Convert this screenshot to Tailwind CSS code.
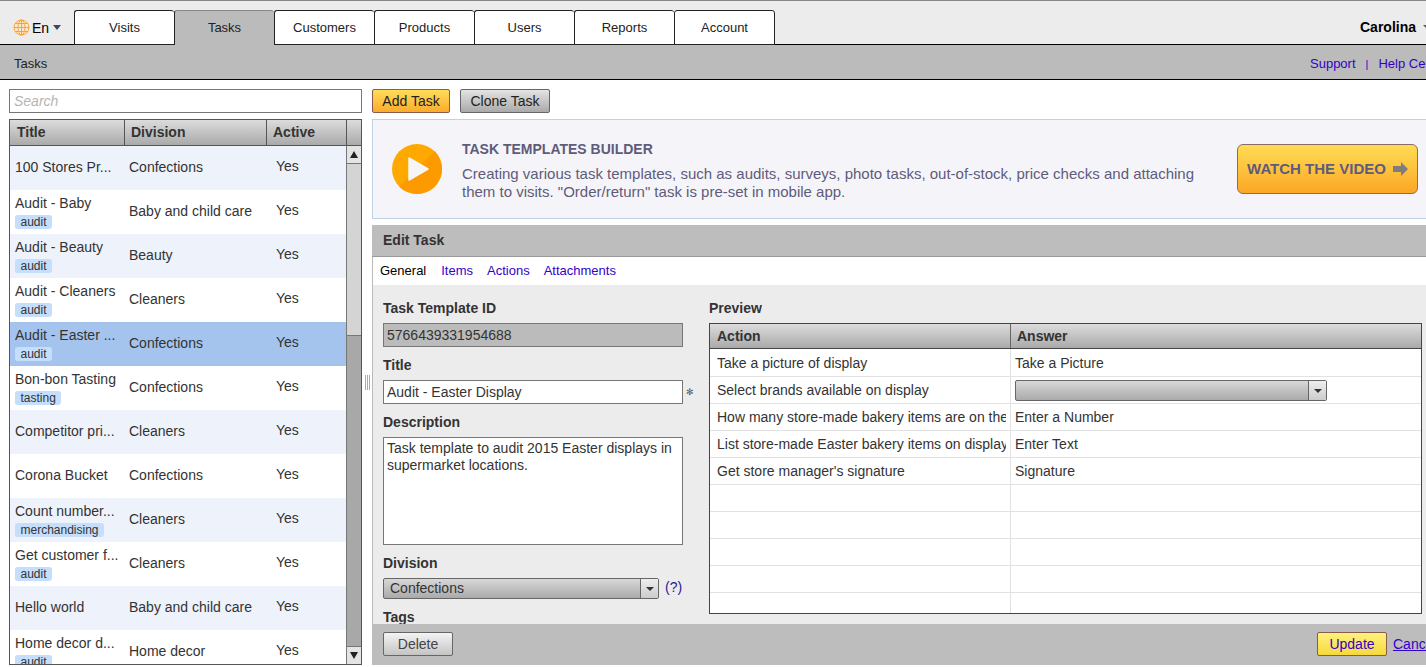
<!DOCTYPE html>
<html lang="en">

<head>
    <meta charset="UTF-8">
    <meta name="viewport" content="width=device-width, initial-scale=1.0">
    <script src="https://cdn.jsdelivr.net/npm/@tailwindcss/browser@4"></script>
    <title>Tasks</title>
</head>

<body class="h-[667px] w-[1426px] overflow-hidden bg-white text-[14px] leading-[18px] text-[#333] font-['Liberation_Sans',sans-serif]">
    <!-- top nav -->
    <header class="flex h-[45px] border-t border-t-[#888] border-b border-b-black bg-[#ececec]">
        <div class="flex w-[74px] shrink-0 items-center pt-[10px] pl-[13px] text-black">
            <svg class="h-[17px] w-[17px]" viewBox="0 0 17 17" fill="none" stroke="#f7a23c" stroke-width="1">
                <circle cx="8.5" cy="8.5" r="7.5" fill="#fde9cf" />
                <ellipse cx="8.5" cy="8.5" rx="3.5" ry="7.5" />
                <path d="M8.5 1v15M1 8.5h15M2 4.5h13M2 12.5h13" />
            </svg>
            <span class="ml-[2px]">En</span>
            <span class="ml-[4px] h-0 w-0 border-x-[4.5px] border-t-[5px] border-x-transparent border-t-[#3a4a63]"></span>
        </div>
        <nav class="mt-[9px] flex h-[35px] text-[13px]">
            <a class="flex w-[100px] items-center justify-center rounded-t-[3px] border-l border-y border-l-[#222] border-y-[#222] bg-white text-[#222]">Visits</a>
            <a class="flex w-[100px] items-center justify-center rounded-t-[3px] border-l border-t border-l-[#222] border-t-[#888] bg-[#bbb] text-[#222]">Tasks</a>
            <a class="flex w-[100px] items-center justify-center rounded-t-[3px] border-l border-y border-l-[#222] border-y-[#222] bg-white text-[#222]">Customers</a>
            <a class="flex w-[100px] items-center justify-center rounded-t-[3px] border-l border-y border-l-[#222] border-y-[#222] bg-white text-[#222]">Products</a>
            <a class="flex w-[100px] items-center justify-center rounded-t-[3px] border-l border-y border-l-[#222] border-y-[#222] bg-white text-[#222]">Users</a>
            <a class="flex w-[100px] items-center justify-center rounded-t-[3px] border-l border-y border-l-[#222] border-y-[#222] bg-white text-[#222]">Reports</a>
            <a class="flex w-[101px] items-center justify-center rounded-t-[3px] border border-[#222] bg-white text-[#222]">Account</a>
        </nav>
        <div class="ml-auto flex items-center pt-[8px] font-bold text-black">
            <span>Carolina</span>
            <span class="ml-[7px] mr-[-3px] h-0 w-0 border-x-[3px] border-t-[3px] border-x-transparent border-t-[#555]"></span>
        </div>
    </header>

    <!-- sub nav -->
    <div class="flex h-[35px] items-center justify-between border-b border-b-black bg-[#bbb] pt-[4px] pl-[14px] text-[13px]">
        <span class="text-[#222]">Tasks</span>
        <div class="flex w-[116px] shrink-0 items-center whitespace-nowrap text-[#3300cc]">
            <a>Support</a>
            <span class="ml-[10px] text-[11px]">|</span>
            <a class="ml-[10px]">Help Center</a>
        </div>
    </div>

    <main class="flex pt-[9px] pl-[9px]">
        <!-- task list -->
        <section class="w-[353px] shrink-0">
            <input type="text" placeholder="Search" class="block h-[24px] w-full border border-[#777] px-[4px] text-[14px] italic placeholder:text-[#b5b5b5] outline-none">
            <div class="mt-[6px] h-[546px] overflow-hidden border border-[#555]">
                <div class="flex h-[26px] border-b border-b-[#555] bg-gradient-to-b from-[#dcdcdc] to-[#aaa] font-bold text-[#333]">
                    <div class="flex w-[115px] items-center border-r border-r-[#555] pb-[2px] pl-[7px]">Title</div>
                    <div class="flex w-[142px] items-center border-r border-r-[#555] pb-[2px] pl-[6px]">Division</div>
                    <div class="flex w-[80px] items-center border-r border-r-[#555] pb-[2px] pl-[6px]">Active</div>
                    <div class="flex-1"></div>
                </div>
                <div class="flex h-[518px]">
                    <div class="w-[337px] overflow-hidden">
                        <div class="grid h-[44px] grid-cols-[119px_147px_1fr] bg-[#eef2fb]">
                            <div class="flex flex-col justify-center pb-[2px] pl-[5px]">100 Stores Pr...</div>
                            <div class="flex items-center pb-[2px]">Confections</div>
                            <div class="flex items-center pb-[5px]">Yes</div>
                        </div>
                        <div class="grid h-[44px] grid-cols-[119px_147px_1fr] bg-white">
                            <div class="pl-[5px] pt-[4px]">Audit - Baby<span class="mt-[3px] block h-[14px] w-fit rounded-[3px] bg-[#c5defc] px-[5.5px] text-[12px] leading-[14px]">audit</span></div>
                            <div class="flex items-center pb-[2px]">Baby and child care</div>
                            <div class="flex items-center pb-[5px]">Yes</div>
                        </div>
                        <div class="grid h-[44px] grid-cols-[119px_147px_1fr] bg-[#eef2fb]">
                            <div class="pl-[5px] pt-[4px]">Audit - Beauty<span class="mt-[3px] block h-[14px] w-fit rounded-[3px] bg-[#c5defc] px-[5.5px] text-[12px] leading-[14px]">audit</span></div>
                            <div class="flex items-center pb-[2px]">Beauty</div>
                            <div class="flex items-center pb-[5px]">Yes</div>
                        </div>
                        <div class="grid h-[44px] grid-cols-[119px_147px_1fr] bg-white">
                            <div class="pl-[5px] pt-[4px]">Audit - Cleaners<span class="mt-[3px] block h-[14px] w-fit rounded-[3px] bg-[#c5defc] px-[5.5px] text-[12px] leading-[14px]">audit</span></div>
                            <div class="flex items-center pb-[2px]">Cleaners</div>
                            <div class="flex items-center pb-[5px]">Yes</div>
                        </div>
                        <div class="grid h-[44px] grid-cols-[119px_147px_1fr] bg-[#a4c3ed]">
                            <div class="pl-[5px] pt-[4px]">Audit - Easter ...<span class="mt-[3px] block h-[14px] w-fit rounded-[3px] bg-[#c5defc] px-[5.5px] text-[12px] leading-[14px]">audit</span></div>
                            <div class="flex items-center pb-[2px]">Confections</div>
                            <div class="flex items-center pb-[5px]">Yes</div>
                        </div>
                        <div class="grid h-[44px] grid-cols-[119px_147px_1fr] bg-white">
                            <div class="pl-[5px] pt-[4px]">Bon-bon Tasting<span class="mt-[3px] block h-[14px] w-fit rounded-[3px] bg-[#c5defc] px-[5.5px] text-[12px] leading-[14px]">tasting</span></div>
                            <div class="flex items-center pb-[2px]">Confections</div>
                            <div class="flex items-center pb-[5px]">Yes</div>
                        </div>
                        <div class="grid h-[44px] grid-cols-[119px_147px_1fr] bg-[#eef2fb]">
                            <div class="flex flex-col justify-center pb-[2px] pl-[5px]">Competitor pri...</div>
                            <div class="flex items-center pb-[2px]">Cleaners</div>
                            <div class="flex items-center pb-[5px]">Yes</div>
                        </div>
                        <div class="grid h-[44px] grid-cols-[119px_147px_1fr] bg-white">
                            <div class="flex flex-col justify-center pb-[2px] pl-[5px]">Corona Bucket</div>
                            <div class="flex items-center pb-[2px]">Confections</div>
                            <div class="flex items-center pb-[5px]">Yes</div>
                        </div>
                        <div class="grid h-[44px] grid-cols-[119px_147px_1fr] bg-[#eef2fb]">
                            <div class="pl-[5px] pt-[4px]">Count number...<span class="mt-[3px] block h-[14px] w-fit rounded-[3px] bg-[#c5defc] px-[5.5px] text-[12px] leading-[14px]">merchandising</span></div>
                            <div class="flex items-center pb-[2px]">Cleaners</div>
                            <div class="flex items-center pb-[5px]">Yes</div>
                        </div>
                        <div class="grid h-[44px] grid-cols-[119px_147px_1fr] bg-white">
                            <div class="pl-[5px] pt-[4px]">Get customer f...<span class="mt-[3px] block h-[14px] w-fit rounded-[3px] bg-[#c5defc] px-[5.5px] text-[12px] leading-[14px]">audit</span></div>
                            <div class="flex items-center pb-[2px]">Cleaners</div>
                            <div class="flex items-center pb-[5px]">Yes</div>
                        </div>
                        <div class="grid h-[44px] grid-cols-[119px_147px_1fr] bg-[#eef2fb]">
                            <div class="flex flex-col justify-center pb-[2px] pl-[5px]">Hello world</div>
                            <div class="flex items-center pb-[2px]">Baby and child care</div>
                            <div class="flex items-center pb-[5px]">Yes</div>
                        </div>
                        <div class="grid h-[44px] grid-cols-[119px_147px_1fr] bg-white">
                            <div class="pl-[5px] pt-[4px]">Home decor d...<span class="mt-[3px] block h-[14px] w-fit rounded-[3px] bg-[#c5defc] px-[5.5px] text-[12px] leading-[14px]">audit</span></div>
                            <div class="flex items-center pb-[2px]">Home decor</div>
                            <div class="flex items-center pb-[5px]">Yes</div>
                        </div>
                    </div>
                    <!-- scrollbar -->
                    <div class="flex w-[15px] flex-col border-l border-l-[#777] bg-[#a8a8a8]">
                        <div class="flex h-[18px] items-center justify-center border-b border-b-[#777] bg-[#e4e4e4]">
                            <span class="h-0 w-0 border-x-[4px] border-b-[7px] border-x-transparent border-b-[#222]"></span>
                        </div>
                        <div class="h-[172px] border-b border-b-[#777] bg-[#d4d4d4]"></div>
                        <div class="flex-1"></div>
                        <div class="flex h-[18px] items-center justify-center border-t border-t-[#777] bg-[#e4e4e4]">
                            <span class="h-0 w-0 border-x-[4px] border-t-[7px] border-x-transparent border-t-[#222]"></span>
                        </div>
                    </div>
                </div>
            </div>
        </section>

        <!-- splitter grip -->
        <div class="flex w-[10px] shrink-0 items-center justify-center pt-[10px]">
            <div class="h-[15px] w-[5px] border-x border-x-[#aaa] bg-[linear-gradient(to_right,#fff_40%,#aaa_40%,#aaa_60%,#fff_60%)]"></div>
        </div>

        <!-- right panel -->
        <section class="w-[1080px] shrink-0">
            <div class="flex h-[24px] gap-[10px]">
                <button class="h-[24px] w-[78px] rounded-[2px] border border-[#8a5a4a] bg-gradient-to-b from-[#ffdc5a] to-[#fbab2a] text-[#222]">Add Task</button>
                <button class="h-[24px] w-[90px] rounded-[2px] border border-[#666] bg-gradient-to-b from-[#e4e4e4] to-[#aaa] text-[#222]">Clone Task</button>
            </div>

            <div class="mt-[6px] flex h-[100px] items-center border-y border-l border-[#c0d2e2] bg-[#f5f5f9] pr-[34px] text-[#5f5b7a]">
                <svg class="ml-[19px] h-[50px] w-[50px] shrink-0" viewBox="0 0 50 50">
                    <circle cx="25" cy="25" r="25" fill="#ffa900" />
                    <path d="M42.7 7.3A25 25 0 0 1 7.3 42.7Z" fill="#fd9a00" />
                    <path d="M17 14L36 25L17 36Z" fill="#f5f5f5" stroke="#f5f5f5" stroke-width="1.5" stroke-linejoin="round" />
                </svg>
                <div class="ml-[20px] w-[760px] pt-[2px]">
                    <h2 class="font-bold">TASK TEMPLATES BUILDER</h2>
                    <p class="mt-[7px] text-[15px]">Creating various task templates, such as audits, surveys, photo tasks, out-of-stock, price checks and attaching<br>them to visits. "Order/return" task is pre-set in mobile app.</p>
                </div>
                <button class="ml-auto flex h-[50px] w-[181px] shrink-0 items-center justify-center rounded-[6px] border border-[#8a6a6a] bg-gradient-to-b from-[#ffdc52] to-[#fba724] text-[15px] font-bold text-[#5f5b7a]">
                    WATCH THE VIDEO
                    <svg class="ml-[7px] h-[14px] w-[15px]" viewBox="0 0 15 14" fill="#7d7d7d">
                        <path d="M0 4h8V0l7 7-7 7v-4H0z" />
                    </svg>
                </button>
            </div>

            <div class="mt-[6px] flex h-[32px] items-center border-b border-b-[#999] bg-[#bdbdbd] pb-[2px] pl-[11px] font-bold text-[#333]">Edit Task</div>
            <div class="flex h-[28px] items-center gap-[14px] border-l border-l-[#bbb] pl-[7px] text-[13px] text-[#3300cc]">
                <a class="mr-[1px] text-black">General</a>
                <a>Items</a>
                <a>Actions</a>
                <a>Attachments</a>
            </div>

            <div class="flex h-[339px] overflow-hidden border-l border-l-[#bbb] bg-[#ececec] pl-[10px]">
                <!-- form -->
                <div class="w-[326px] shrink-0 pt-[14px]">
                    <label class="block font-bold text-[#333]">Task Template ID</label>
                    <input type="text" readonly value="5766439331954688" class="mt-[6px] block h-[24px] w-[300px] border border-[#777] bg-[#bbb] px-[3px] text-[14px] text-[#333] outline-none">
                    <label class="mt-[9px] block font-bold text-[#333]">Title</label>
                    <div class="mt-[6px] flex items-center">
                        <input type="text" value="Audit - Easter Display" class="block h-[24px] w-[300px] border border-[#777] bg-white px-[3px] text-[14px] text-[#333] outline-none">
                        <span class="ml-[3px] text-[9px] text-[#555]">✻</span>
                    </div>
                    <label class="mt-[9px] block font-bold text-[#333]">Description</label>
                    <textarea class="mt-[6px] block h-[108px] w-[300px] resize-none border border-[#777] bg-white px-[3px] pt-[2px] pb-[1px] text-[14px] leading-[17px] text-[#333] outline-none">Task template to audit 2015 Easter displays in supermarket locations.</textarea>
                    <label class="mt-[9px] block font-bold text-[#333]">Division</label>
                    <div class="mt-[6px] flex items-center">
                        <div class="flex h-[21px] w-[276px] items-stretch rounded-[2px] border border-[#666] bg-gradient-to-b from-[#d8d8d8] to-[#aaa]">
                            <span class="flex flex-1 items-center pb-[2px] pl-[6px]">Confections</span>
                            <span class="flex w-[18px] items-center justify-center border-l border-l-[#666] bg-gradient-to-b from-[#eee] to-[#ccc]">
                                <span class="h-0 w-0 border-x-[4px] border-t-[4px] border-x-transparent border-t-[#333]"></span>
                            </span>
                        </div>
                        <a class="ml-[6px] pb-[3px] text-[#2a1a8c]">(?)</a>
                    </div>
                    <label class="mt-[9px] block font-bold text-[#333]">Tags</label>
                </div>

                <!-- preview -->
                <div class="w-[713px] shrink-0 pt-[14px]">
                    <div class="font-bold text-[#333]">Preview</div>
                    <div class="mt-[6px] h-[291px] overflow-hidden border border-[#444] bg-white">
                        <div class="grid h-[25px] grid-cols-[301px_1fr] border-b border-b-[#444] bg-gradient-to-b from-[#dcdcdc] to-[#aaa] font-bold text-[#333]">
                            <div class="flex items-center border-r border-r-[#666] pl-[7px]">Action</div>
                            <div class="flex items-center pl-[6px]">Answer</div>
                        </div>
                        <div class="grid h-[28px] grid-cols-[301px_1fr] border-b border-b-[#e2e2e2]">
                            <div class="border-r border-r-[#e2e2e2] pl-[7px] pt-[5px] whitespace-nowrap">Take a picture of display</div>
                            <div class="pl-[4px] pt-[5px]">Take a Picture</div>
                        </div>
                        <div class="grid h-[27px] grid-cols-[301px_1fr] border-b border-b-[#e2e2e2]">
                            <div class="border-r border-r-[#e2e2e2] pl-[7px] pt-[4px] whitespace-nowrap">Select brands available on display</div>
                            <div class="pl-[4px] pt-[3px]">
                                <div class="flex h-[21px] w-[312px] rounded-[2px] border border-[#666] bg-gradient-to-b from-[#d8d8d8] to-[#aaa]">
                                    <span class="flex-1"></span>
                                    <span class="flex w-[18px] items-center justify-center border-l border-l-[#666] bg-gradient-to-b from-[#eee] to-[#ccc]">
                                        <span class="h-0 w-0 border-x-[4px] border-t-[4px] border-x-transparent border-t-[#333]"></span>
                                    </span>
                                </div>
                            </div>
                        </div>
                        <div class="grid h-[27px] grid-cols-[301px_1fr] border-b border-b-[#e2e2e2]">
                            <div class="border-r border-r-[#e2e2e2] pl-[7px] pt-[4px]"><div class="w-[289px] overflow-hidden whitespace-nowrap">How many store-made bakery items are on the</div></div>
                            <div class="pl-[4px] pt-[4px]">Enter a Number</div>
                        </div>
                        <div class="grid h-[27px] grid-cols-[301px_1fr] border-b border-b-[#e2e2e2]">
                            <div class="border-r border-r-[#e2e2e2] pl-[7px] pt-[4px]"><div class="w-[289px] overflow-hidden whitespace-nowrap">List store-made Easter bakery items on display</div></div>
                            <div class="pl-[4px] pt-[4px]">Enter Text</div>
                        </div>
                        <div class="grid h-[27px] grid-cols-[301px_1fr] border-b border-b-[#e2e2e2]">
                            <div class="border-r border-r-[#e2e2e2] pl-[7px] pt-[4px] whitespace-nowrap">Get store manager's signature</div>
                            <div class="pl-[4px] pt-[4px]">Signature</div>
                        </div>
                        <div class="grid h-[27px] grid-cols-[301px_1fr] border-b border-b-[#e2e2e2]"><div class="border-r border-r-[#e2e2e2]"></div></div>
                        <div class="grid h-[27px] grid-cols-[301px_1fr] border-b border-b-[#e2e2e2]"><div class="border-r border-r-[#e2e2e2]"></div></div>
                        <div class="grid h-[27px] grid-cols-[301px_1fr] border-b border-b-[#e2e2e2]"><div class="border-r border-r-[#e2e2e2]"></div></div>
                        <div class="grid h-[27px] grid-cols-[301px_1fr] border-b border-b-[#e2e2e2]"><div class="border-r border-r-[#e2e2e2]"></div></div>
                        <div class="grid h-[27px] grid-cols-[301px_1fr]"><div class="border-r border-r-[#e2e2e2]"></div></div>
                    </div>
                </div>
            </div>

            <!-- footer buttons -->
            <div class="flex h-[41px] items-center bg-[#bdbdbd] pb-[1px] pl-[11px]">
                <button class="h-[24px] w-[70px] rounded-[2px] border border-[#666] bg-gradient-to-b from-[#f4f4f4] to-[#c4c4c4] text-[#444]">Delete</button>
                <button class="ml-[864px] h-[24px] w-[70px] rounded-[2px] border border-[#8a5a4a] bg-gradient-to-b from-[#fff27a] to-[#f5d93a] text-[#3300cc]">Update</button>
                <a class="ml-[6px] text-[#3300cc] underline">Cancel</a>
            </div>
        </section>
    </main>
</body>

</html>
